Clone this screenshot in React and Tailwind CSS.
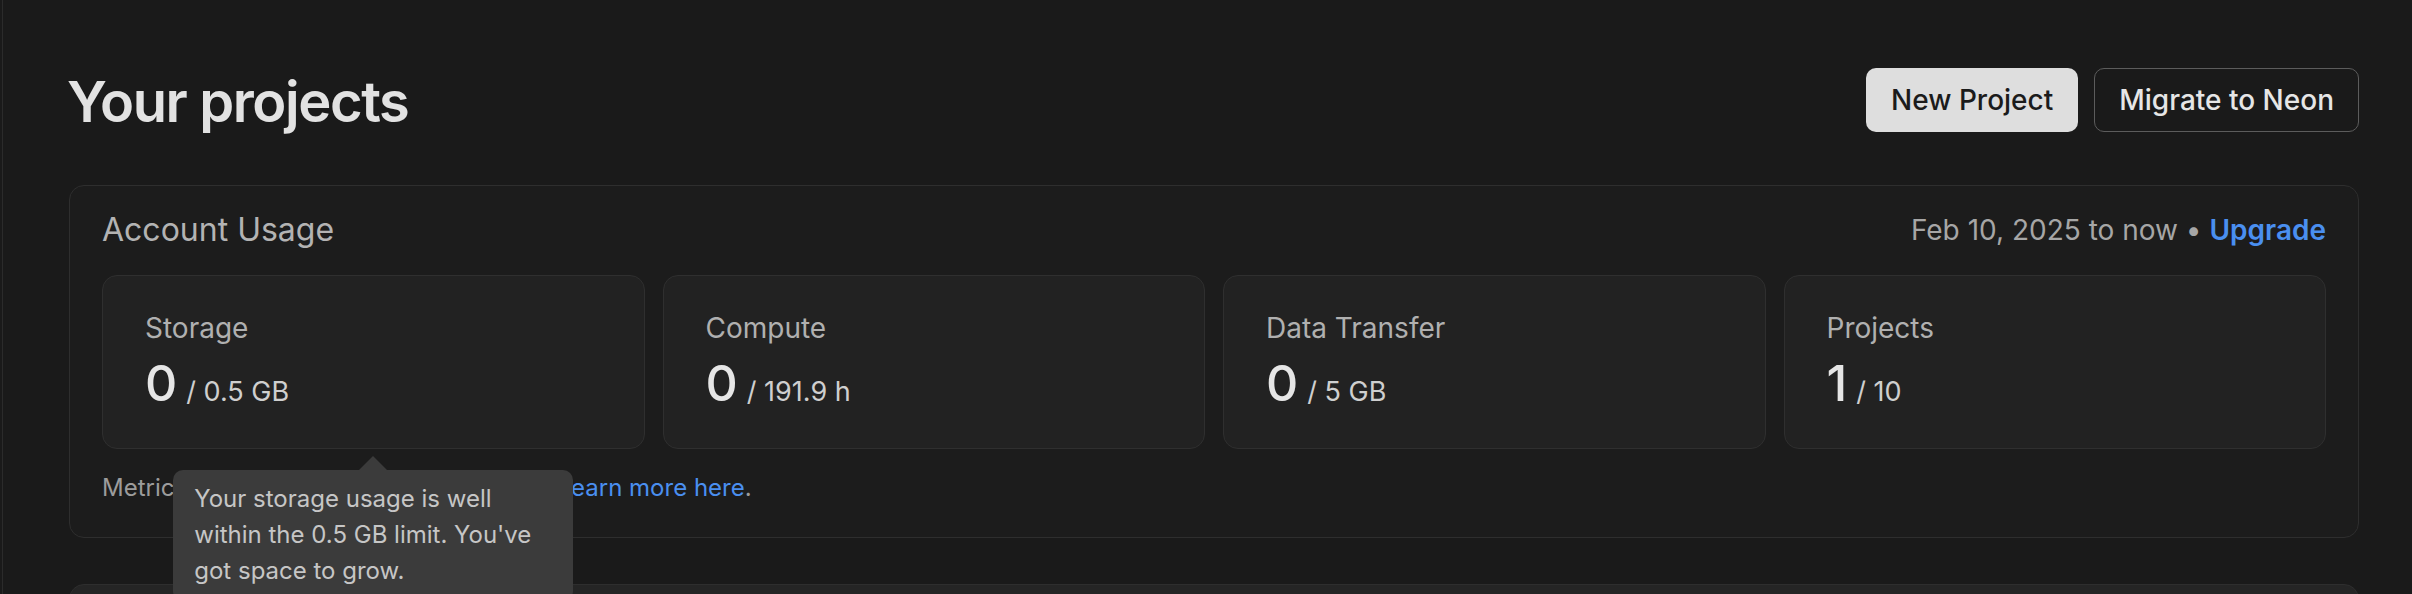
import React from "react";

const stats = [
  { label: "Storage", value: "0", unit: "/ 0.5 GB", tooltip: true },
  { label: "Compute", value: "0", unit: "/ 191.9 h" },
  { label: "Data Transfer", value: "0", unit: "/ 5 GB" },
  { label: "Projects", value: "1", unit: "/ 10" },
];

function StatCard({ label, value, unit, tooltip }) {
  return (
    <div className="relative h-[174px] rounded-[15px] border border-[#2f2f2f] bg-[#222222] pl-[42px] pt-[32px]">
      <div className="text-[28px] leading-[40px] text-[#b0b0b0]">{label}</div>
      <div className="mt-[10px] flex items-baseline">
        <span className="text-[50px] leading-[50px] font-medium text-[#e6e6e6]">{value}</span>
        <span className="ml-[9px] text-[27px] leading-[50px] text-[#cfcfcf]">{unit}</span>
      </div>
      {tooltip && (
        <div className="absolute left-1/2 top-[194px] z-10 w-[400px] -translate-x-1/2 rounded-[10px] bg-[#3b3b3b] px-[21px] pt-[11px] pb-[12px] text-[24px] leading-[36px] text-[#c6c6c6]">
          <div className="absolute -top-[14px] left-1/2 h-0 w-0 -translate-x-1/2 border-l-[14px] border-r-[14px] border-b-[14px] border-l-transparent border-r-transparent border-b-[#3b3b3b]" />
          Your storage usage is well within the 0.5 GB limit. You've got space to grow.
        </div>
      )}
    </div>
  );
}

export default function App() {
  return (
    <div
      className="flex h-screen w-full overflow-hidden bg-[#1a1a1a]"
      style={{ fontFamily: "Inter, 'Noto Sans', sans-serif" }}
    >
      <div className="w-[2px]" />
      <div className="w-px bg-[#2b2b2b]" />
      <main className="flex-1 pl-[66px] pr-[53px] pt-[66px]">
        <div className="flex h-[67px] items-center justify-between">
          <h1 className="-ml-[2px] pt-[5px] text-[56px] leading-[67px] font-semibold tracking-[-0.025em] text-[#e2e2e2]">
            Your projects
          </h1>
          <div className="flex items-center gap-[16px]">
            <button className="h-[64px] rounded-[10px] bg-[#dedede] px-[25px] text-[28px] font-medium text-[#1b1b1b]">
              New Project
            </button>
            <button className="h-[64px] rounded-[10px] border-[1.5px] border-[#5c5c5c] px-[24px] text-[28px] font-medium text-[#e6e6e6]">
              Migrate to Neon
            </button>
          </div>
        </div>

        <section className="mt-[52px] rounded-[15px] border border-[#2e2e2e] bg-[#1c1c1c] px-[32px] pt-[20px] pb-[31px]">
          <div className="flex h-[48px] items-center justify-between">
            <h2 className="text-[32px] leading-[48px] text-[#b3b3b3]">Account Usage</h2>
            <div className="text-[28px] leading-[48px] text-[#a6a6a6]">
              Feb 10, 2025 to now • <a className="font-semibold text-[#4a8ff0]">Upgrade</a>
            </div>
          </div>
          <div className="mt-[21px] grid grid-cols-4 gap-[18px]">
            {stats.map((s) => (
              <StatCard key={s.label} {...s} />
            ))}
          </div>
          <p className="mt-[21px] text-[24px] leading-[36px] text-[#9c9c9c]">
            Metrics may be delayed up to one hour.{" "}
            <a className="text-[#4a8ff0]">Learn more here</a>.
          </p>
        </section>

        <section className="mt-[46px] h-[200px] rounded-[15px] border border-[#2e2e2e] bg-[#252525]" />
      </main>
    </div>
  );
}
